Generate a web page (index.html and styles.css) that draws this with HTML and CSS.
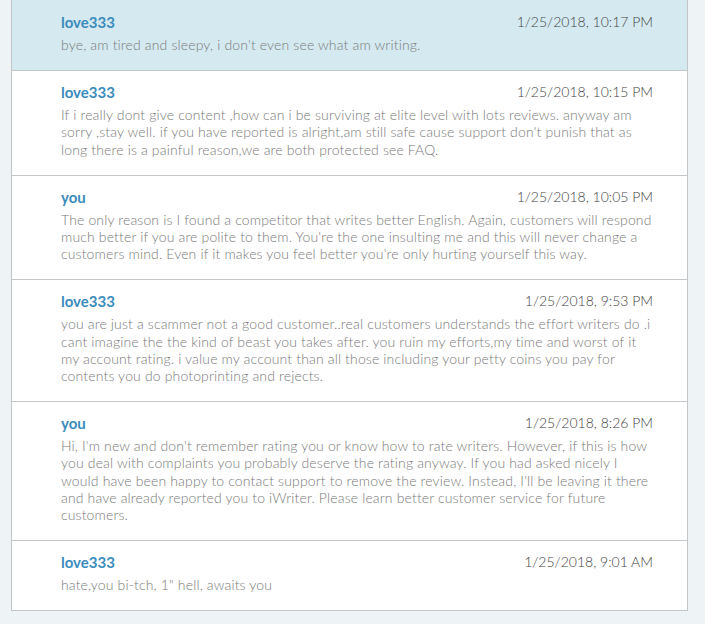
FILE: index.html
```html
<!DOCTYPE html>
<html lang="en">
<head>
    <meta charset="UTF-8">
    <meta name="viewport" content="width=device-width, initial-scale=1.0">
    <title>Messages</title>
    <link rel="stylesheet" href="styles.css">
</head>
<body>
    <div class="thread">
        <div class="message unread">
            <div class="message-head">
                <span class="author">love333</span>
                <span class="date">1/25/2018, 10:17 PM</span>
            </div>
            <p class="message-text">bye, am tired and sleepy, i don't even see what am writing.</p>
        </div>

        <div class="message">
            <div class="message-head">
                <span class="author">love333</span>
                <span class="date">1/25/2018, 10:15 PM</span>
            </div>
            <p class="message-text">If i really dont give content ,how can i be surviving at elite level with lots reviews. anyway am sorry ,stay well. if you have reported is alright,am still safe cause support don't punish that as long there is a painful reason,we are both protected see FAQ.</p>
        </div>

        <div class="message">
            <div class="message-head">
                <span class="author">you</span>
                <span class="date">1/25/2018, 10:05 PM</span>
            </div>
            <p class="message-text">The only reason is I found a competitor that writes better English. Again, customers will respond much better if you are polite to them. You're the one insulting me and this will never change a customers mind. Even if it makes you feel better you're only hurting yourself this way.</p>
        </div>

        <div class="message">
            <div class="message-head">
                <span class="author">love333</span>
                <span class="date">1/25/2018, 9:53 PM</span>
            </div>
            <p class="message-text">you are just a scammer not a good customer..real customers understands the effort writers do .i cant imagine the the kind of beast you takes after. you ruin my efforts,my time and worst of it my account rating. i value my account than all those including your petty coins you pay for contents you do photoprinting and rejects.</p>
        </div>

        <div class="message">
            <div class="message-head">
                <span class="author">you</span>
                <span class="date">1/25/2018, 8:26 PM</span>
            </div>
            <p class="message-text">Hi, I'm new and don't remember rating you or know how to rate writers. However, if this is how you deal with complaints you probably deserve the rating anyway. If you had asked nicely I would have been happy to contact support to remove the review. Instead, I'll be leaving it there and have already reported you to iWriter. Please learn better customer service for future customers.</p>
        </div>

        <div class="message">
            <div class="message-head">
                <span class="author">love333</span>
                <span class="date">1/25/2018, 9:01 AM</span>
            </div>
            <p class="message-text">hate,you bi-tch, 1" hell, awaits you</p>
        </div>
    </div>
</body>
</html>
```

FILE: styles.css
```css
:root {
    --page-bg: #eef3f6;
    --unread-bg: #d5e9f1;
    --line: #c2c6c9;
    --author: #3a8cbc;
    --text: #7a7a7a;
    --date: #444;
}

body {
    margin: 0;
    background: var(--page-bg);
    font-family: Lato, "Open Sans", sans-serif;
    font-weight: 300;
}

.thread {
    width: 675px;
    margin-left: 11px;
    background: #fff;
    border-left: 1px solid var(--line);
    border-right: 1px solid var(--line);
}

.message {
    padding: 10px 34px 17px 49px;
    border-bottom: 1px solid var(--line);
}

.message.unread {
    background: var(--unread-bg);
    padding-top: 11px;
}

.message-head {
    display: flex;
    justify-content: space-between;
    align-items: center;
    height: 22px;
    line-height: 22px;
}

.author {
    color: var(--author);
    font-size: 15px;
    font-weight: 700;
}

.date {
    color: var(--date);
    font-size: 14px;
}

.message-text {
    margin: 3px 0 0;
    color: var(--text);
    font-size: 14px;
    line-height: 17.2px;
    letter-spacing: 0.15px;
}
```
